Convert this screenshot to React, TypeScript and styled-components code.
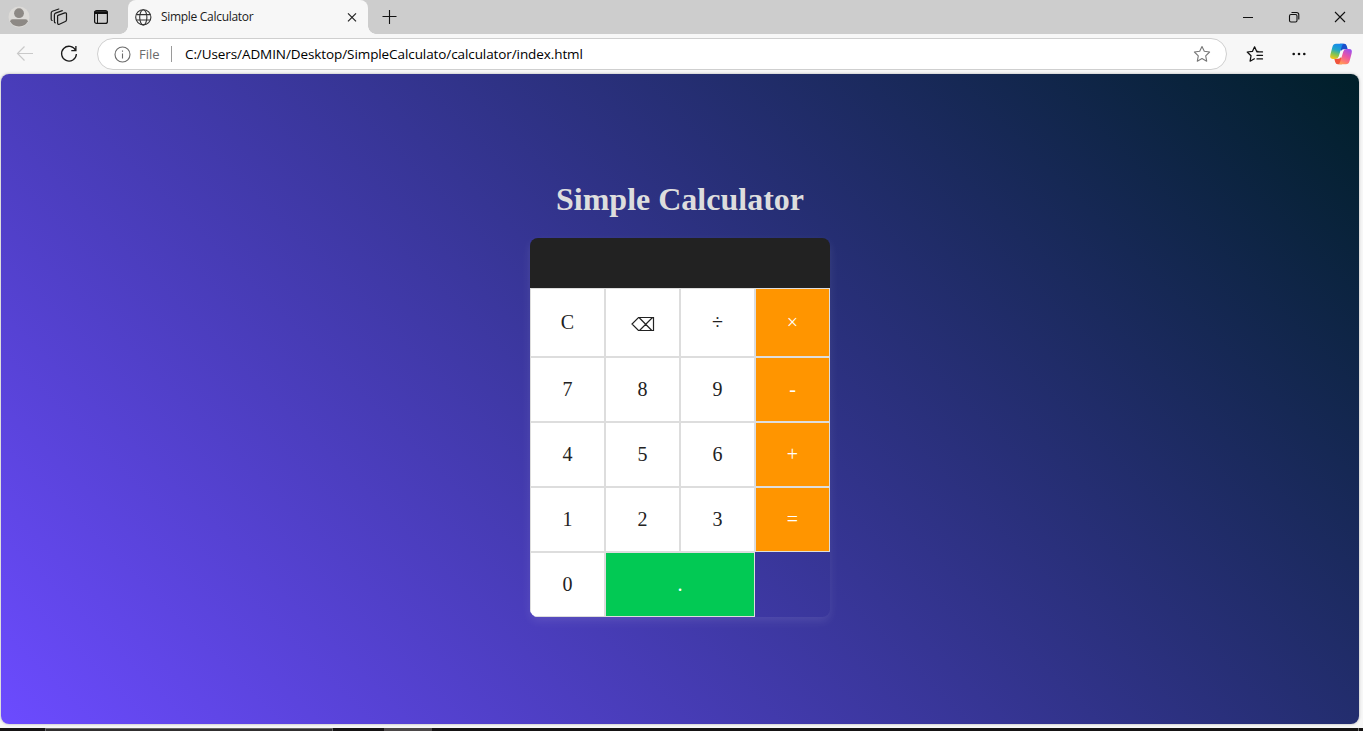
import React from "react";
import styled, { createGlobalStyle } from "styled-components";

const GlobalStyle = createGlobalStyle`
  *, *::before, *::after { box-sizing: border-box; }
  html, body { margin: 0; padding: 0; overflow: hidden; }
  body { font-family: "Open Sans", "Noto Sans", sans-serif; }
`;

const Window = styled.div`
  width: 1363px;
  height: 731px;
  display: flex;
  flex-direction: column;
  background: #f7f7f7;
  overflow: hidden;
`;

const TabStrip = styled.header`
  height: 34px;
  flex: none;
  display: flex;
  background: #cdcdcd;
`;

const TabActions = styled.div`
  width: 128px;
  display: grid;
  grid-template-columns: 42px 43px 16px;
  align-items: center;
  padding-left: 8px;
  svg { display: block; }
`;

const Tab = styled.div`
  position: relative;
  width: 240px;
  height: 34px;
  display: flex;
  align-items: center;
  padding: 0 9px 0 7px;
  background: #f7f7f7;
  border-radius: 8px 8px 0 0;
  &::before, &::after {
    content: "";
    position: absolute;
    bottom: 0;
    width: 8px;
    height: 8px;
  }
  &::before {
    left: -8px;
    background: radial-gradient(circle at 0 0, transparent 7.5px, #f7f7f7 8px);
  }
  &::after {
    right: -8px;
    background: radial-gradient(circle at 100% 0, transparent 7.5px, #f7f7f7 8px);
  }
`;

const TabTitle = styled.span`
  flex: 1;
  margin-left: 9px;
  font-size: 12px;
  line-height: 16px;
  letter-spacing: -0.3px;
  color: #1b1b1b;
  white-space: nowrap;
`;

const NewTab = styled.div`
  display: flex;
  align-items: center;
  padding-left: 14px;
`;

const WindowControls = styled.div`
  margin-left: auto;
  display: flex;
`;

const WindowButton = styled.div`
  width: 46px;
  height: 34px;
  display: flex;
  align-items: center;
  justify-content: center;
`;

const Toolbar = styled.div`
  height: 40px;
  flex: none;
  display: flex;
  align-items: center;
  padding: 0 10px 0 16px;
  svg { display: block; flex: none; }
`;

const NavButtons = styled.div`
  width: 81px;
  display: flex;
  align-items: center;
  gap: 26px;
`;

const AddressBar = styled.div`
  width: 1130px;
  height: 32px;
  display: flex;
  align-items: center;
  padding: 0 15px 0 16px;
  background: #fff;
  border: 1px solid #cfcfcf;
  border-radius: 16px;
`;

const Scheme = styled.span`
  margin-left: 8px;
  width: 32px;
  font-size: 13px;
  color: #6b6b6b;
`;

const Divider = styled.span`
  width: 1px;
  height: 16px;
  background: #9a9a9a;
`;

const Address = styled.span`
  flex: 1;
  margin-left: 13px;
  font-size: 13.5px;
  letter-spacing: -0.09px;
  color: #000;
  white-space: nowrap;
`;

const ToolbarIcons = styled.div`
  display: flex;
  align-items: center;
  width: 107px;
  margin-left: 19px;
`;

const Ellipsis = styled.svg`
  margin: 0 auto 0 28px;
`;

const Page = styled.main`
  width: 1358px;
  height: 650px;
  flex: none;
  margin-left: 1px;
  border-radius: 8px;
  display: flex;
  flex-direction: column;
  align-items: center;
  background: linear-gradient(45deg, #6c4bff, #001f29);
  box-shadow: 0 0 3px rgba(0, 0, 0, 0.3);
  font-family: "Liberation Serif", "Times New Roman", serif;
`;

const Heading = styled.h1`
  margin: 107px 0 21px;
  font-size: 32px;
  line-height: 36px;
  font-weight: bold;
  color: #ddd;
`;

const Calculator = styled.section`
  width: 300px;
  border-radius: 8px;
  overflow: hidden;
  box-shadow: 0 4px 10px rgba(255, 255, 255, 0.1);
`;

const Display = styled.div`
  height: 50px;
  background: #222;
`;

const Keypad = styled.div`
  display: grid;
  grid-template-columns: repeat(4, 75px);
  grid-template-rows: 69px repeat(4, 65px);
`;

type Tone = "plain" | "operator" | "accent";

const fills: Record<Tone, string> = {
  plain: "#fff",
  operator: "#ff9500",
  accent: "#02c954",
};

const Key = styled.button<{ $tone: Tone; $span: number }>`
  grid-column: span ${(p) => p.$span};
  margin: 0;
  padding: 0;
  border: 1px solid #ddd;
  background: ${(p) => fills[p.$tone]};
  color: ${(p) => (p.$tone === "plain" ? "#222" : "#fff")};
  font-family: "Liberation Serif", "DejaVu Sans", serif;
  font-size: 20px;
  line-height: 23px;
  display: flex;
  align-items: center;
  justify-content: center;
`;

const Taskbar = styled.footer`
  height: 3px;
  margin-top: 4px;
  flex: none;
  display: flex;
  background: #151313;
`;

const TaskbarSearch = styled.div`
  width: 288px;
  margin-left: 45px;
  background: #302e2e;
  border: 1px solid #666;
  border-bottom: 0;
`;

const TaskbarItem = styled.div`
  width: 48px;
  margin-left: 51px;
  background: #4b4747;
`;

const ShowDesktop = styled.div`
  width: 1px;
  margin: 0 4px 0 auto;
  background: #777;
`;

const keys: { label: React.ReactNode; name: string; tone?: Tone; span?: number }[] = [
  { label: "C", name: "clear" },
  {
    label: (
      <svg width="24" height="16" viewBox="0 0 24 16" fill="none" stroke="#222" strokeWidth="1.2">
        <path d="M7.5 2.5H22.5V15.5H7.5L1 9Z M8 2.5L20.8 15.5 M21.5 2.5L8.5 15.5" />
      </svg>
    ),
    name: "delete",
  },
  { label: "÷", name: "divide" },
  { label: "×", name: "multiply", tone: "operator" },
  { label: "7", name: "7" },
  { label: "8", name: "8" },
  { label: "9", name: "9" },
  { label: "-", name: "subtract", tone: "operator" },
  { label: "4", name: "4" },
  { label: "5", name: "5" },
  { label: "6", name: "6" },
  { label: "+", name: "add", tone: "operator" },
  { label: "1", name: "1" },
  { label: "2", name: "2" },
  { label: "3", name: "3" },
  { label: "=", name: "equals", tone: "operator" },
  { label: "0", name: "0" },
  { label: ".", name: "point", tone: "accent", span: 2 },
];

const ProfileIcon = () => (
  <svg width="22" height="22" viewBox="0 0 22 22">
    <circle cx="11" cy="11" r="10.5" fill="#dcdad7" />
    <circle cx="11" cy="7.2" r="4.9" fill="#8d8985" />
    <path d="M2.2 15.3Q2.2 13.2 4.5 13.2H17.5Q19.8 13.2 19.8 15.3C18.6 18.4 15.4 20.5 11 20.5S3.4 18.4 2.2 15.3Z" fill="#8d8985" />
  </svg>
);

const WorkspacesIcon = () => (
  <svg width="18" height="18" viewBox="0 0 18 18" fill="none" stroke="#1b1b1b" strokeWidth="1.2" strokeLinejoin="round" strokeLinecap="round">
    <path d="M8 7.4L14.8 4.9Q16.5 4.4 16.5 6V11.7Q16.5 13 15.3 13.5L9.4 16.2Q7.6 16.9 7.6 15V8.2Q7.6 7.5 8 7.4Z" />
    <path d="M5.3 14.8Q4.4 14.7 4.4 13.4V6.8Q4.4 5.6 5.5 5.1L12.3 2.6" />
    <path d="M2.2 12.5Q1.2 12.3 1.2 11V4.9Q1.2 3.7 2.3 3.2L8.8 1" />
  </svg>
);

const TabsIcon = () => (
  <svg width="16" height="16" viewBox="0 0 16 16">
    <rect x="1.6" y="1.6" width="12.8" height="12.8" rx="2" fill="none" stroke="#111" strokeWidth="1.2" />
    <path d="M1.5 2.2H14.5V5H1.5Z" fill="#111" />
    <path d="M4.5 5V14.5" stroke="#111" />
  </svg>
);

const GlobeIcon = () => (
  <svg width="17" height="17" viewBox="0 0 17 17" fill="none" stroke="#333" strokeWidth="1.1">
    <circle cx="8.3" cy="8.3" r="7.6" />
    <ellipse cx="8.3" cy="8.3" rx="3.6" ry="7.6" />
    <path d="M1.3 5.6H15.3M1.3 11H15.3" />
  </svg>
);

const StarIcon = () => (
  <svg width="18" height="18" viewBox="0 0 18 18" fill="none" stroke="#777" strokeWidth="1.1" strokeLinejoin="round">
    <path d="M9 1.5L11.3 6.3L16.6 7L12.7 10.8L13.7 16.2L9 13.6L4.3 16.2L5.3 10.8L1.4 7L6.7 6.3Z" />
  </svg>
);

const FavoritesIcon = () => (
  <svg width="18" height="18" viewBox="0 0 18 18" fill="none" stroke="#111" strokeWidth="1.25" strokeLinejoin="round" strokeLinecap="round">
    <path d="M12 6.4H10.7L8.6 1.8L6.4 6.4L1.2 7L5 10.8L4.1 16.2L8.4 13.8M11 6.9H16.5M11 10.4H16.5M11 13.9H16.5" />
  </svg>
);

const CopilotIcon = () => (
  <svg width="24" height="22" viewBox="0 0 24 22">
    <defs>
      <linearGradient id="cool" x1="0.6" y1="0" x2="0.3" y2="1">
        <stop offset="0" stopColor="#1688ee" />
        <stop offset="0.4" stopColor="#20a6c8" />
        <stop offset="0.7" stopColor="#7fc454" />
        <stop offset="1" stopColor="#f2c51a" />
      </linearGradient>
      <linearGradient id="warm" x1="0.8" y1="0" x2="0.3" y2="1">
        <stop offset="0" stopColor="#9a50ef" />
        <stop offset="0.45" stopColor="#e854a6" />
        <stop offset="0.8" stopColor="#ff7b70" />
        <stop offset="1" stopColor="#ff9e55" />
      </linearGradient>
    </defs>
    <path d="M11 0.8H15.3Q17.2 0.8 17.8 3L18.7 6.2H14.8Q13.3 6.2 12.6 7.4L10.5 7Z" fill="#1850cc" />
    <path d="M13 21.2H8.7Q6.8 21.2 6.2 19L5.3 15.8H9.2Q10.7 15.8 11.4 14.6L13.5 15Z" fill="#f0543c" />
    <path d="M7 0.8H15Q13.6 0.8 12.9 3L9.7 13.6Q9 15.9 6.2 15.9H3.8Q0.3 15.9 1.4 11.5L3.4 4Q4.3 0.8 7 0.8Z" fill="url(#cool)" />
    <path d="M17 21.2H9Q10.4 21.2 11.1 19L14.3 8.4Q15 6.1 17.8 6.1H20.2Q23.7 6.1 22.6 10.5L20.6 18Q19.7 21.2 17 21.2Z" fill="url(#warm)" />
  </svg>
);

export default function App() {
  return (
    <>
      <GlobalStyle />
      <Window>
        <TabStrip>
          <TabActions>
            <ProfileIcon />
            <WorkspacesIcon />
            <TabsIcon />
          </TabActions>
          <Tab>
            <GlobeIcon />
            <TabTitle>Simple Calculator</TabTitle>
            <svg width="14" height="14" viewBox="0 0 14 14" stroke="#222" strokeWidth="1.2">
              <path d="M3 3.3L11 11.3M11 3.3L3 11.3" />
            </svg>
          </Tab>
          <NewTab>
            <svg width="16" height="16" viewBox="0 0 16 16" stroke="#111" strokeWidth="1.1">
              <path d="M7.5 1V15M0.5 7.5H14.5" />
            </svg>
          </NewTab>
          <WindowControls>
            <WindowButton>
              <svg width="12" height="12" viewBox="0 0 12 12" stroke="#111">
                <path d="M1 6.5H11" />
              </svg>
            </WindowButton>
            <WindowButton>
              <svg width="12" height="12" viewBox="0 0 12 12" fill="none" stroke="#111" strokeWidth="1.1">
                <rect x="1.5" y="3.5" width="7.5" height="7.5" rx="1.5" />
                <path d="M3.5 1.5H8.5Q10.8 1.5 10.8 3.8V8.5" />
              </svg>
            </WindowButton>
            <WindowButton>
              <svg width="12" height="12" viewBox="0 0 12 12" stroke="#111" strokeWidth="1.1">
                <path d="M1 1L11 11M11 1L1 11" />
              </svg>
            </WindowButton>
          </WindowControls>
        </TabStrip>
        <Toolbar>
          <NavButtons>
            <svg width="18" height="18" viewBox="0 0 18 18" fill="none" stroke="#c9c9c9" strokeWidth="1.2">
              <path d="M17 8.5H1.5M8.5 1.5L1.5 8.5L8.5 15.5" />
            </svg>
            <svg width="18" height="18" viewBox="0 0 18 18" fill="none" stroke="#1b1b1b" strokeWidth="1.3">
              <path d="M15.7 5.5A7.4 7.4 0 1 0 16.4 9M15.9 1V5.7H11.3" />
            </svg>
          </NavButtons>
          <AddressBar>
            <svg width="17" height="17" viewBox="0 0 17 17" fill="none" stroke="#6b6b6b" strokeWidth="1.1">
              <circle cx="8.5" cy="8.5" r="7.5" />
              <path d="M8.5 7.5V12.5M8.5 4.5V5.8" />
            </svg>
            <Scheme>File</Scheme>
            <Divider />
            <Address>C:/Users/ADMIN/Desktop/SimpleCalculato/calculator/index.html</Address>
            <StarIcon />
          </AddressBar>
          <ToolbarIcons>
            <FavoritesIcon />
            <Ellipsis width="14" height="4" viewBox="0 0 14 4" fill="#111">
              <circle cx="1.7" cy="2" r="1.3" />
              <circle cx="7" cy="2" r="1.3" />
              <circle cx="12.3" cy="2" r="1.3" />
            </Ellipsis>
            <CopilotIcon />
          </ToolbarIcons>
        </Toolbar>
        <Page>
          <Heading>Simple Calculator</Heading>
          <Calculator>
            <Display />
            <Keypad>
              {keys.map((k) => (
                <Key key={k.name} aria-label={k.name} $tone={k.tone ?? "plain"} $span={k.span ?? 1}>
                  {k.label}
                </Key>
              ))}
            </Keypad>
          </Calculator>
        </Page>
        <Taskbar>
          <TaskbarSearch />
          <TaskbarItem />
          <ShowDesktop />
        </Taskbar>
      </Window>
    </>
  );
}
